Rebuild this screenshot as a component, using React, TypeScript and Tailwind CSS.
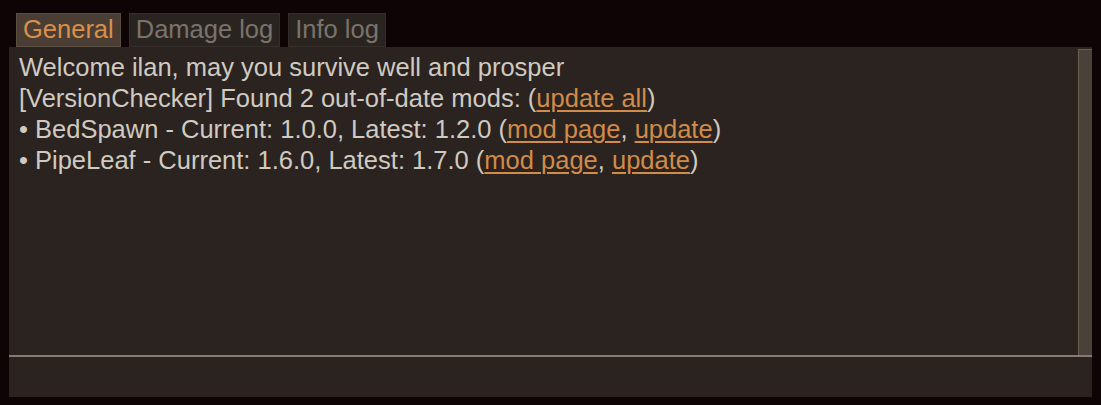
import React from "react";

const tabs = [
  { label: "General", active: true },
  { label: "Damage log", active: false },
  { label: "Info log", active: false },
];

function Link({ children }: { children: React.ReactNode }) {
  return <span className="text-[#d28b48] underline underline-offset-[3px] decoration-[1.5px]">{children}</span>;
}

export default function App() {
  return (
    <div
      className="w-[1101px] h-[405px] bg-[#0e0405] pt-[13px] pl-[9px] pr-[9px] pb-[8px] flex flex-col"
      style={{ fontFamily: '"Liberation Sans", Arial, sans-serif' }}
    >
      <div className="flex gap-[8px] pl-[7px] h-[34px]">
        {tabs.map((t) => (
          <div
            key={t.label}
            className={`px-[6px] flex items-center text-[25.5px] leading-none border ${
              t.active
                ? "bg-[#4a3e34] border-[#5a4d42] text-[#d9904a]"
                : "bg-[#2a2421] border-[#342d29] text-[#7a736b]"
            }`}
          >
            {t.label}
          </div>
        ))}
      </div>
      <div className="flex-1 bg-[#2a2320] flex flex-col">
        <div className="flex-1 flex">
          <div className="flex-1 px-[10px] pt-[5px] text-[25.5px] leading-[31px] text-[#d0cac1]">
            <div>Welcome ilan, may you survive well and prosper</div>
            <div>
              [VersionChecker] Found 2 out-of-date mods: (<Link>update all</Link>)
            </div>
            <div>
              • BedSpawn - Current: 1.0.0, Latest: 1.2.0 (<Link>mod page</Link>, <Link>update</Link>)
            </div>
            <div>
              • PipeLeaf - Current: 1.6.0, Latest: 1.7.0 (<Link>mod page</Link>, <Link>update</Link>)
            </div>
          </div>
          <div className="w-[14px] mt-[2px] bg-[#4a4238] border-l border-t border-[#6a6056]" />
        </div>
        <div className="h-[2px] bg-[#857b72]" />
        <div className="h-[40px]" />
      </div>
    </div>
  );
}
